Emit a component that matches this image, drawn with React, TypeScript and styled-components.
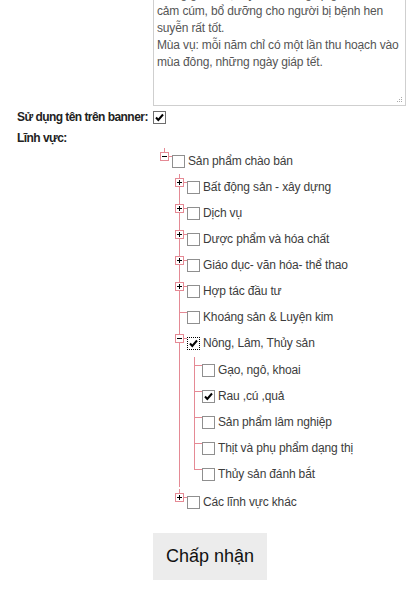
import React from "react";
import styled, { createGlobalStyle } from "styled-components";

const Global = createGlobalStyle`
  html, body { margin: 0; padding: 0; background: #fff; }
  body { font-family: "Liberation Sans", Arial, sans-serif; }
`;

const LINE = "#e58a95";

const Form = styled.div`
  display: grid;
  grid-template-columns: 136px 253px;
  margin-top: -17px;
  padding-left: 17px;
`;

const Cell = styled.div<{ $span?: boolean }>`
  grid-column: ${(p) => (p.$span ? "1 / span 2" : "auto")};
  min-width: 0;
`;

const TextBox = styled.div`
  position: relative;
  box-sizing: border-box;
  height: 123px;
  border: 1px solid #cfcfcf;
  padding: 2px 3px;
  font-size: 12px;
  line-height: 17px;
  letter-spacing: -0.15px;
  color: #555;
  white-space: pre;
  overflow: hidden;
`;

const Grip = styled.svg`
  position: absolute;
  right: 2px;
  bottom: 2px;
`;

const Label = styled.div<{ $h: number; $top?: number }>`
  font-weight: bold;
  font-size: 12px;
  letter-spacing: -0.55px;
  color: #222;
  height: ${(p) => p.$h}px;
  line-height: ${(p) => p.$h}px;
  margin-top: ${(p) => p.$top ?? 0}px;
  white-space: nowrap;
`;

const CheckRow = styled.div`
  display: flex;
  align-items: center;
  height: 21px;
  margin-top: 1px;
`;

const Box = styled.span<{ $focus?: boolean; $dark?: boolean }>`
  display: inline-flex;
  align-items: center;
  justify-content: center;
  box-sizing: border-box;
  width: 13px;
  height: 13px;
  flex: none;
  background: #fff;
  border: 1px ${(p) => (p.$focus ? "dotted #000" : "solid")}
    ${(p) => (p.$focus ? "" : p.$dark ? "#6e6e6e" : "#8f8f8f")};
  margin-right: 3px;
`;

const TreeList = styled.ul<{ $depth: number }>`
  list-style: none;
  padding: 0;
  margin: ${(p) => (p.$depth >= 2 ? 1 : 0)}px 0 2px ${(p) => (p.$depth === 0 ? 4 : 15)}px;
`;

const Node = styled.li<{ $last: boolean }>`
  position: relative;
  &::before {
    content: "";
    position: absolute;
    left: 7px;
    top: 0;
    width: 1px;
    height: ${(p) => (p.$last ? "9px" : "100%")};
    background: ${LINE};
  }
`;

const Row = styled.div`
  position: relative;
  display: flex;
  align-items: center;
  height: 26px;
  padding-left: 15px;
  font-size: 12px;
  letter-spacing: -0.15px;
  color: #3c3c3c;
  white-space: nowrap;
  &::before {
    content: "";
    position: absolute;
    left: 7px;
    top: 8px;
    width: 8px;
    height: 1px;
    background: ${LINE};
  }
`;

const Toggle = styled.span`
  position: absolute;
  left: 3px;
  top: 4px;
  width: 9px;
  height: 9px;
  box-sizing: border-box;
  border: 1px solid ${LINE};
  background: #fff;
  z-index: 1;
  &::before {
    content: "";
    position: absolute;
    left: 1px;
    top: 3px;
    width: 5px;
    height: 1px;
    background: #000;
  }
`;

const Plus = styled(Toggle)`
  &::after {
    content: "";
    position: absolute;
    left: 3px;
    top: 1px;
    width: 1px;
    height: 5px;
    background: #000;
  }
`;

const Button = styled.button`
  justify-self: start;
  margin-top: 16px;
  height: 47px;
  padding: 0 13px;
  border: none;
  background: #ececec;
  font-family: "Liberation Sans", Arial, sans-serif;
  font-size: 18px;
  color: #111;
  cursor: pointer;
`;

const Check = () => (
  <svg width="11" height="11" viewBox="0 0 11 11">
    <path d="M2 5.5 L4.3 8 L9 2.5" fill="none" stroke="#000" strokeWidth="2" />
  </svg>
);

type TNode = {
  label: string;
  checked?: boolean;
  focus?: boolean;
  state?: "open" | "closed";
  children?: TNode[];
};

const data: TNode[] = [
  {
    label: "Sản phẩm chào bán",
    state: "open",
    children: [
      { label: "Bất động sản - xây dựng", state: "closed" },
      { label: "Dịch vụ", state: "closed" },
      { label: "Dược phẩm và hóa chất", state: "closed" },
      { label: "Giáo dục- văn hóa- thể thao", state: "closed" },
      { label: "Hợp tác đầu tư", state: "closed" },
      { label: "Khoáng sản & Luyện kim" },
      {
        label: "Nông, Lâm, Thủy sản",
        state: "open",
        checked: true,
        focus: true,
        children: [
          { label: "Gạo, ngô, khoai" },
          { label: "Rau ,cú ,quả", checked: true },
          { label: "Sản phẩm lâm nghiệp" },
          { label: "Thịt và phụ phẩm dạng thị" },
          { label: "Thủy sản đánh bắt" },
        ],
      },
      { label: "Các lĩnh vực khác", state: "closed" },
    ],
  },
];

const TreeItems: React.FC<{ nodes: TNode[]; depth: number }> = ({ nodes, depth }) => (
  <TreeList $depth={depth}>
    {nodes.map((n, i) => (
      <Node key={n.label} $last={i === nodes.length - 1}>
        <Row>
          {n.state === "open" && <Toggle />}
          {n.state === "closed" && <Plus />}
          <Box $focus={n.focus}>{n.checked && <Check />}</Box>
          {n.label}
        </Row>
        {n.state === "open" && n.children && (
          <TreeItems nodes={n.children} depth={depth + 1} />
        )}
      </Node>
    ))}
  </TreeList>
);

const text = [
  "Gừng già có vị cay, tính ấm, giúp giải cảm, chữa",
  "cảm cúm, bổ dưỡng cho người bị bệnh hen",
  "suyễn rất tốt.",
  "Mùa vụ: mỗi năm chỉ có một lần thu hoạch vào",
  "mùa đông, những ngày giáp tết.",
].join("\n");

export default function App() {
  return (
    <>
      <Global />
      <Form>
        <Cell />
        <Cell>
          <TextBox>
            {text}
            <Grip width="6" height="6" viewBox="0 0 6 6">
              <rect x="4" y="0" width="1" height="1" fill="#aaa" />
              <rect x="2" y="2" width="1" height="1" fill="#aaa" />
              <rect x="4" y="2" width="1" height="1" fill="#aaa" />
              <rect x="0" y="4" width="1" height="1" fill="#aaa" />
              <rect x="2" y="4" width="1" height="1" fill="#aaa" />
              <rect x="4" y="4" width="1" height="1" fill="#aaa" />
            </Grip>
          </TextBox>
        </Cell>
        <Label $h={21} $top={1}>Sử dụng tên trên banner:</Label>
        <CheckRow>
          <Box $dark>
            <Check />
          </Box>
        </CheckRow>
        <Cell $span>
          <Label $h={20}>Lĩnh vực:</Label>
        </Cell>
        <Cell />
        <Cell>
          <TreeItems nodes={data} depth={0} />
        </Cell>
        <Cell />
        <Button>Chấp nhận</Button>
      </Form>
    </>
  );
}
